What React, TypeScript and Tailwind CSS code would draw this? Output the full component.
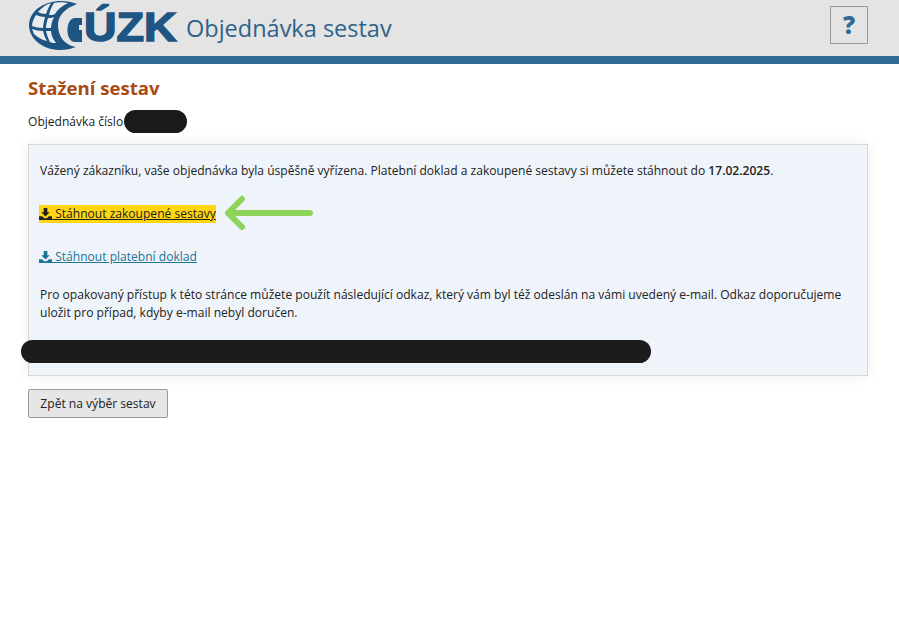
import React from 'react';

const DownloadIcon = ({ className }: { className: string }) => (
  <svg viewBox="0 0 14 13" className={className} fill="currentColor">
    <path d="M5 0h4v4.5h2.6L7 9.2 2.4 4.5H5z" />
    <path d="M0 9h3.4L5.6 11h2.8L10.6 9H14v4H0z" />
  </svg>
);

const Logo = () => (
  <div className="flex items-center h-[56px] w-[150px] overflow-hidden relative">
    <svg viewBox="0 0 64 56" className="w-[64px] h-[56px] shrink-0" fill="none">
      <path d="M49 4 C30 -4 2 4 1 25 C1 44 26 56 48 47 C36 45 30 36 30 25 C30 15 38 8 49 4z" fill="#1f5582" />
      <g fill="#e9edf0">
        <path d="M10 12 C14 7 19 4 23 3 C21 7 19 10 18 14 C15 14 12 13 10 12z" />
        <path d="M26 3 C30 2 36 2 40 3 C34 6 30 9 27 14 C25 15 23 15 21 15 C22 10 24 6 26 3z" />
        <path d="M8 15 C11 16 14 17 17 17 C16 21 15 25 15 28 C11 28 7 27 4 26 C4 22 6 18 8 15z" />
        <path d="M20 18 C22 18 24 18 26 17 C24 21 23 25 23 28 C22 28 20 28 18 28 C18 25 19 21 20 18z" />
        <path d="M4 29 C8 30 11 31 15 31 C16 35 17 38 19 41 C14 40 9 37 6 34z" />
        <path d="M18 31 H23 C23 35 25 39 28 43 C25 43 24 43 22 42 C20 38 19 35 18 31z" />
      </g>
      <path d="M47 18 H54 V25 H51 V30 H54 V42 H47 C37 42 37 18 47 18z" fill="#1f5582" />
    </svg>
    <span className="absolute left-[56px] top-[3px] text-[41px] leading-[48px] font-bold origin-left scale-x-[1.1] text-[#1f5582] [font-family:'Liberation_Sans',sans-serif] [-webkit-text-stroke:1.5px_#1f5582]">
      ÚZK
    </span>
  </div>
);

export default function App() {
  return (
    <div className="min-h-[644px] bg-white text-[12.07px] leading-[18px] text-[#222] [font-family:'Open_Sans','Noto_Sans',sans-serif]">
      <header className="h-[64px] bg-[#e4e4e4] border-b-[8px] border-[#2e6c96] pl-[28px] pr-[31px] flex items-center justify-between">
        <div className="flex items-center gap-[8px]">
          <Logo />
          <span className="text-[23.5px] text-[#2e6289]">Objednávka sestav</span>
        </div>
        <button className="w-[38px] h-[38px] border border-[#999] flex items-center justify-center text-[24px] font-extrabold text-[#2e6c96] mt-[-6px]">
          ?
        </button>
      </header>

      <main className="px-[28px] pr-[31px]">
        <h1 className="mt-[11px] text-[18.6px] leading-[26px] font-bold text-[#a94a12]">Stažení sestav</h1>
        <div className="relative mt-[10px] h-[22px] flex items-center">
          <span>Objednávka číslo</span>
          <div className="absolute left-[96px] top-[-1px] w-[63px] h-[23px] rounded-full bg-[#1a1a1a]" />
        </div>

        <section className="relative mt-[11px] h-[232px] bg-[#eff4fb] border border-[#d6d6d6] shadow-[0_0_12px_rgba(0,0,0,0.08)] px-[10px] pt-[17px]">
          <p className="pl-[1px]">
            Vážený zákazníku, vaše objednávka byla úspěšně vyřízena. Platební doklad a zakoupené sestavy si můžete stáhnout do <b className="font-semibold">17.02.2025</b>.
          </p>
          <div className="mt-[16px] flex items-center">
            <a className="flex items-center bg-[#ffd60f] text-[#222] underline h-[18px]">
              <DownloadIcon className="w-[13px] h-[12px]" />
              <span>&nbsp;Stáhnout zakoupené sestavy</span>
            </a>
            <svg viewBox="0 0 92 38" className="w-[92px] h-[38px] ml-[5px] mt-[-2px] text-[#8fd45a]" fill="none" stroke="currentColor" strokeWidth="6" strokeLinecap="round" strokeLinejoin="round">
              <path d="M89 19 H8 M21 5 L7 19 L21 33" />
            </svg>
          </div>
          <a className="mt-[16px] flex items-center text-[#1b7596] underline w-fit">
            <DownloadIcon className="w-[13px] h-[12px]" />
            <span>&nbsp;Stáhnout platební doklad</span>
          </a>
          <p className="mt-[20px] pl-[1px]">
            Pro opakovaný přístup k této stránce můžete použít následující odkaz, který vám byl též odeslán na vámi uvedený e-mail. Odkaz doporučujeme uložit pro případ, kdyby e-mail nebyl doručen.
          </p>
          <div className="absolute left-[-8px] top-[195px] w-[630px] h-[23px] rounded-full bg-[#1c1c1c]" />
        </section>

        <button className="mt-[13px] w-[140px] h-[29px] bg-[#e6e6e6] border border-[#999] rounded-[2px] text-[#222]">
          Zpět na výběr sestav
        </button>
      </main>
    </div>
  );
}
